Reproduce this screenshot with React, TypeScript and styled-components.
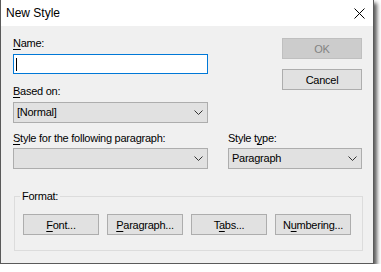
import styled, { createGlobalStyle } from "styled-components";

const Global = createGlobalStyle`
  body {
    margin: 0;
    background: #ffffff;
    font-family: "Liberation Sans", Arial, sans-serif;
    font-size: 11px;
    letter-spacing: -0.25px;
  }
`

const Window = styled.div`
  width: 372px;
  height: 263px;
  border: 1px solid #5a5a5a;
  border-top: none;
  background: #f0f0f0;
  box-shadow: 3px 3px 4px rgba(0, 0, 0, 0.65);
  display: flex;
  flex-direction: column;
  color: #000;
`

const TitleBar = styled.div`
  height: 26px;
  background: #ffffff;
  display: flex;
  align-items: center;
  justify-content: space-between;
  padding: 0 0 0 5px;
  line-height: 26px;
`

const Title = styled.span`
  font-size: 12px;
  letter-spacing: 0;
`

const CloseBtn = styled.div`
  width: 28px;
  height: 26px;
  display: flex;
  align-items: center;
  justify-content: center;
`

const Body = styled.div`
  flex: 1;
  padding: 10px 11px 0 12px;
  display: flex;
  flex-direction: column;
`

const Top = styled.div`
  display: flex;
  justify-content: space-between;
`

const Col = styled.div`
  display: flex;
  flex-direction: column;
  width: ${(p: { w: number }) => p.w}px;
`

const Label = styled.div`
  line-height: 15px;
  height: 15px;
  margin-bottom: ${(p: { gap?: number }) => p.gap ?? 3}px;
  white-space: nowrap;
`

const U = styled.span`
  text-decoration: underline;
  text-underline-offset: 2px;
`

const TextInput = styled.div`
  height: 18px;
  border: 1px solid #0078d7;
  background: #ffffff;
  display: flex;
  align-items: center;
  padding-left: 2px;
  margin-bottom: 10px;
`

const Caret = styled.div`
  width: 1px;
  height: 13px;
  background: #000;
`

const Combo = styled.div`
  height: 19px;
  border: 1px solid #adadad;
  background: #e1e1e1;
  display: flex;
  align-items: center;
  justify-content: space-between;
  padding: 0 4px 0 3px;
  line-height: 19px;
`

const Btn = styled.div`
  box-sizing: border-box;
  width: ${(p: { w?: number }) => p.w ?? 76}px;
  height: 21px;
  border: 1px solid ${(p: { disabled?: boolean }) => (p.disabled ? "#bfbfbf" : "#adadad")};
  background: ${(p: { disabled?: boolean }) => (p.disabled ? "#cccccc" : "#e1e1e1")};
  color: ${(p: { disabled?: boolean }) => (p.disabled ? "#838383" : "#000")};
  display: flex;
  align-items: center;
  justify-content: center;
`

const BtnStack = styled.div`
  display: flex;
  flex-direction: column;
  gap: 10px;
  padding-top: 2px;
`

const Row = styled.div`
  display: flex;
  justify-content: space-between;
  margin-top: 8px;
`

const Group = styled.fieldset`
  margin: 20px 0 0 1px;
  width: 349px;
  height: 62px;
  box-sizing: border-box;
  border: 1px solid #dcdcdc;
  padding: 0 0 0 8px;
  & > legend {
    padding: 0 2px;
    margin-left: -3px;
    line-height: 15px;
  }
`

const Buttons = styled.div`
  display: flex;
  gap: 8px;
  margin-top: 10px;
`

function Chevron() {
  return (
    <svg width="9" height="5" viewBox="0 0 9 5">
      <path d="M0.5 0.5 L4.5 4.5 L8.5 0.5" fill="none" stroke="#333" strokeWidth="1" />
    </svg>
  )
}

export default function App() {
  return (
    <>
      <Global />
      <Window>
        <TitleBar>
          <Title>New Style</Title>
          <CloseBtn>
            <svg width="11" height="11" viewBox="0 0 11 11">
              <path d="M0.5 0.5 L10.5 10.5 M10.5 0.5 L0.5 10.5" stroke="#000" strokeWidth="1" />
            </svg>
          </CloseBtn>
        </TitleBar>
        <Body>
          <Top>
            <Col w={195}>
              <Label><U>N</U>ame:</Label>
              <TextInput><Caret /></TextInput>
              <Label><U>B</U>ased on:</Label>
              <Combo>[Normal]<Chevron /></Combo>
            </Col>
            <BtnStack>
              <Btn w={80} disabled>OK</Btn>
              <Btn w={80}>Cancel</Btn>
            </BtnStack>
          </Top>
          <Row>
            <Col w={195}>
              <Label gap={2}><U>S</U>tyle for the following paragraph:</Label>
              <Combo><span /><Chevron /></Combo>
            </Col>
            <Col w={134}>
              <Label gap={2}>Style t<U>y</U>pe:</Label>
              <Combo>Paragraph<Chevron /></Combo>
            </Col>
          </Row>
          <Group>
            <legend>Format:</legend>
            <Buttons>
              <Btn><span><U>F</U>ont...</span></Btn>
              <Btn><span><U>P</U>aragraph...</span></Btn>
              <Btn><span>T<U>a</U>bs...</span></Btn>
              <Btn><span>N<U>u</U>mbering...</span></Btn>
            </Buttons>
          </Group>
        </Body>
      </Window>
    </>
  )
}
